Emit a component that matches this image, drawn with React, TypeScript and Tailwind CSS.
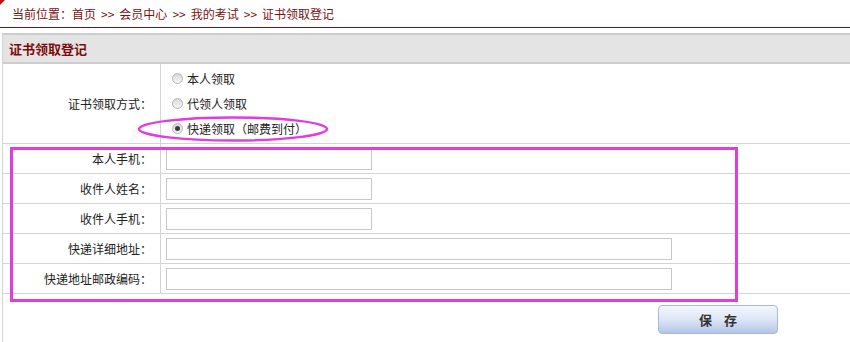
import React from 'react';

const font = { fontFamily: '"Noto Sans CJK SC", "Liberation Sans", sans-serif' };

const fields: { label: string; wide: boolean }[] = [
  { label: '本人手机：', wide: false },
  { label: '收件人姓名：', wide: false },
  { label: '收件人手机：', wide: false },
  { label: '快递详细地址：', wide: true },
  { label: '快递地址邮政编码：', wide: true },
];

const options = ['本人领取', '代领人领取', '快递领取（邮费到付）'];

const crumbs = ['首页', '会员中心', '我的考试', '证书领取登记'];

const Radio = ({ checked }: { checked: boolean }) => (
  <span className="w-[11px] h-[11px] rounded-full border border-[#b4b4b4] bg-gradient-to-b from-[#d8d8d8] to-[#f8f8f8] flex items-center justify-center shrink-0">
    {checked && <span className="w-[5px] h-[5px] rounded-full bg-[#3a3a3a]" />}
  </span>
);

export default function App() {
  return (
    <div className="w-[850px] h-[342px] bg-white relative overflow-hidden text-[12px] text-[#222]" style={font}>
      {/* corner mark */}
      <div className="absolute left-0 top-0 w-0 h-0 border-t-[5px] border-t-[#c01010] border-r-[5px] border-r-transparent" />

      {/* breadcrumb */}
      <div className="h-[28px] pl-[12px] flex items-center border-b border-[#6e1a1a] text-[#7a1212] leading-none">
        <span>当前位置：</span>
        {crumbs.map((c, i) => (
          <React.Fragment key={c}>
            {i > 0 && <span className="px-[5px]">&gt;&gt;</span>}
            <span>{c}</span>
          </React.Fragment>
        ))}
      </div>

      <div className="mt-[5px] ml-[2px] border-l border-[#d4d4d4] h-[400px]">
        {/* panel title */}
        <div className="h-[31px] bg-[#e4e4e4] border-t-2 border-b-2 border-[#cdcdcd] flex items-center pl-[6px]">
          <span className="font-bold text-[#7c0d0d] text-[13px]">证书领取登记</span>
        </div>

        {/* method row */}
        <div className="flex border-b border-[#d4d4d4] h-[80px]">
          <div className="w-[158px] border-r border-[#d4d4d4] flex items-center justify-end pr-[8px]">证书领取方式：</div>
          <div className="flex flex-col justify-center gap-[9px] pl-[11px]">
            {options.map((o, i) => (
              <div key={o} className="flex items-center gap-[4px] h-[16px]">
                <Radio checked={i === 2} />
                <span>{o}</span>
              </div>
            ))}
          </div>
        </div>

        {fields.map((f) => (
          <div key={f.label} className="flex border-b border-[#d4d4d4] h-[30px]">
            <div className="w-[158px] border-r border-[#d4d4d4] flex items-center justify-end pr-[8px]">{f.label}</div>
            <div className="flex items-center pl-[5px]">
              <div className={`${f.wide ? 'w-[506px]' : 'w-[206px]'} h-[22px] border border-[#c8c8c8] bg-white`} />
            </div>
          </div>
        ))}

        {/* save */}
        <div className="pl-[655px] pt-[11px]">
          <button className="w-[120px] h-[29px] rounded-[4px] border border-[#a9b9da] bg-gradient-to-b from-[#f4f7fc] via-[#dde6f6] to-[#b3c4e8] font-bold text-[#333] text-[13px] tracking-[12px] pl-[12px]">
            保存
          </button>
        </div>
      </div>

      {/* annotation marks */}
      <div className="absolute left-[10px] top-[147px] w-[728px] h-[155px] border-[3px] border-[#e03ce0]" />
      <svg className="absolute left-[136px] top-[114px]" width="194" height="30" viewBox="0 0 194 30">
        <ellipse cx="97" cy="15" rx="94" ry="11.5" fill="none" stroke="#e03ce0" strokeWidth="2.5" />
      </svg>
    </div>
  );
}
